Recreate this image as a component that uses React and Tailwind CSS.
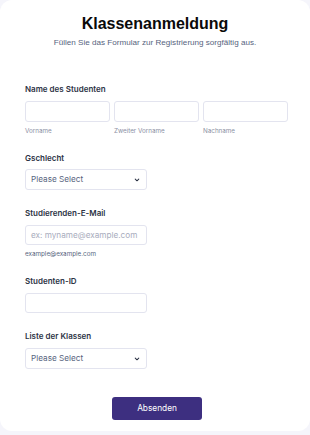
import React from "react";

function Chevron() {
  return (
    <svg width="8" height="8" viewBox="0 0 10 10" fill="none" className="shrink-0">
      <path d="M2.8 3.9 L5 6 L7.2 3.9" stroke="#2c3345" strokeWidth="1.3" strokeLinecap="round" strokeLinejoin="round" />
    </svg>
  );
}

function Label({ children, className = "" }) {
  return (
    <div className={"h-[8px] text-[8px] font-semibold text-[#2c3345] leading-none whitespace-nowrap " + className}>
      {children}
    </div>
  );
}

function Select() {
  return (
    <div className="w-[122px] h-[21px] border border-[#e3e4ef] rounded-[3px] bg-white flex items-center justify-between pl-[5px] pr-[5px]">
      <span className="text-[8.2px] text-[#57647e] leading-none">Please Select</span>
      <Chevron />
    </div>
  );
}

export default function App() {
  return (
    <div className="w-[310px] h-[435px] bg-[#f5f5fb] font-['Inter',sans-serif]">
      <div className="w-[310px] h-[431px] bg-white rounded-[12px] flex flex-col">
        <div className="pt-[16px] flex flex-col items-center">
          <h1 className="h-[16px] text-[16px] font-bold text-[#0a0a0a] leading-[16px] font-['Liberation_Sans',Arial,sans-serif]">
            Klassenanmeldung
          </h1>
          <p className="mt-[7px] h-[8px] text-[8.1px] text-[#57647e] leading-none font-['Liberation_Sans',Arial,sans-serif] whitespace-nowrap">
            Füllen Sie das Formular zur Registrierung sorgfältig aus.
          </p>
        </div>

        <div className="pl-[25px] flex flex-col">
          <Label className="mt-[38px]">Name des Studenten</Label>
          <div className="mt-[8px] flex gap-[4px]">
            {["Vorname", "Zweiter Vorname", "Nachname"].map((s) => (
              <div key={s} className="w-[85px] flex flex-col">
                <div className="h-[21px] border border-[#e3e4ef] rounded-[3px]" />
                <div className="mt-[6px] h-[7px] text-[6.3px] text-[#8b8fa3] leading-none whitespace-nowrap">{s}</div>
              </div>
            ))}
          </div>

          <Label className="mt-[19px]">Gschlecht</Label>
          <div className="mt-[7px]">
            <Select />
          </div>

          <Label className="mt-[19px]">Studierenden-E-Mail</Label>
          <div className="mt-[8px] w-[122px] h-[20px] border border-[#e3e4ef] rounded-[3px] flex items-center pl-[5px]">
            <span className="text-[8.2px] text-[#a8acbd] leading-none whitespace-nowrap">ex: myname@example.com</span>
          </div>
          <div className="mt-[6px] h-[7px] text-[6.3px] text-[#57647e] leading-none whitespace-nowrap">example@example.com</div>

          <Label className="mt-[19px]">Studenten-ID</Label>
          <div className="mt-[8px] w-[122px] h-[20px] border border-[#e3e4ef] rounded-[3px]" />

          <Label className="mt-[19px]">Liste der Klassen</Label>
          <div className="mt-[8px]">
            <Select />
          </div>
        </div>

        <div className="mt-[28px] flex justify-center pl-[4px]">
          <button className="w-[90px] h-[23px] bg-[#3d2f80] rounded-[3px] text-white text-[8.3px] leading-none">
            Absenden
          </button>
        </div>
      </div>
    </div>
  );
}
